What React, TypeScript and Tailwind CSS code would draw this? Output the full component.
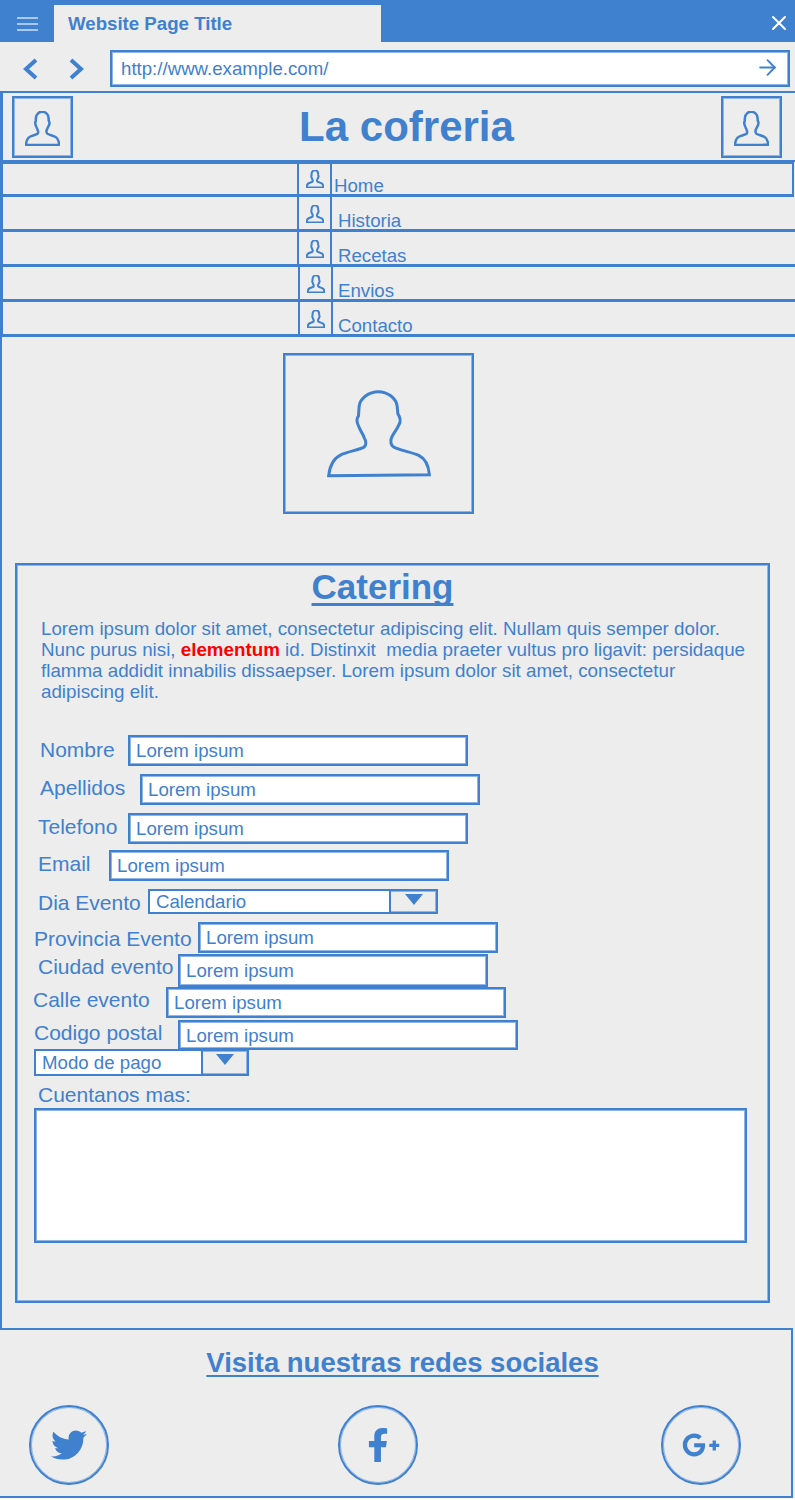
import { ArrowRight, X } from 'lucide-react';
import { FaFacebookF, FaGooglePlusG, FaTwitter } from 'react-icons/fa';

// the wireframe's lines are 2px with a soft lighter edge
const edge = 'border-2 border-[#3f80cf] shadow-[inset_0_0_0_1px_#8fb6e6]';
const circle = 'flex h-[80px] w-[80px] items-center justify-center rounded-full border-2 border-[#3f80cf] shadow-[inset_0_0_0_1px_#8fb6e6]';

const navItems = [
  { label: 'Home', cell: 'ml-[294px] pt-[6px]', text: 'pl-[2px] h-[32px]' },
  { label: 'Historia', cell: 'ml-[294px] pt-[8px]', text: 'pl-[6px] h-[34px]' },
  { label: 'Recetas', cell: 'ml-[294px] pt-[8px]', text: 'pl-[6px] h-[34px]' },
  { label: 'Envios', cell: 'ml-[295px] pt-[8px]', text: 'pl-[5px] h-[34px]' },
  { label: 'Contacto', cell: 'ml-[295px] pt-[8px]', text: 'pl-[5px] h-[34px]' },
];

function Person({ className, weight = 2 }: { className: string; weight?: number }) {
  return (
    <svg className={className} viewBox="0 0 320 265" preserveAspectRatio="none" fill="none" stroke="currentColor">
      <path
        vectorEffect="non-scaling-stroke"
        strokeWidth={weight}
        d="M8 258C12 225 22 205 45 195C65 186 100 180 115 172C122 165 122 155 115 143C112 132 104 125 98 108C92 95 92 85 98 78L100 50C102 25 130 5 158 5C186 5 213 25 215 50L217 72C226 85 226 95 220 105C213 122 198 135 196 150C195 160 198 168 205 172C225 182 260 188 280 197C300 207 310 230 312 255Z"
      />
    </svg>
  );
}

function Field({ className }: { className: string }) {
  return (
    <input
      readOnly
      defaultValue="Lorem ipsum"
      className={`bg-white ${edge} px-[6px] pt-[2px] text-[18.67px] outline-none ${className}`}
    />
  );
}

function Dropdown({ label, className, boxWidth }: { label: string; className: string; boxWidth: string }) {
  return (
    <div className={`flex ${edge} ${className}`}>
      <div className={`flex items-center bg-white pl-[6px] pt-[1px] text-[18.67px] leading-[19px] ${boxWidth}`}>{label}</div>
      <div className="flex flex-1 items-start justify-center border-l-2 border-[#3f80cf] pt-[3px]">
        <div className="h-0 w-0 border-x-[9px] border-t-[11px] border-x-transparent border-t-[#3f80cf]" />
      </div>
    </div>
  );
}

export default function App() {
  return (
    <div className="w-[795px] h-[1500px] overflow-hidden bg-white text-[#3f80cf] font-['Liberation_Sans',Arial,sans-serif]">
      {/* browser chrome */}
      <div className="flex h-[42px] bg-[#3f80cf]">
        <div className="flex w-[54px] items-center justify-center pt-[5px]">
          <div className="flex w-[21px] flex-col gap-[4px]">
            <div className="h-[2px] bg-[#a9c8ee]" />
            <div className="h-[2px] bg-[#a9c8ee]" />
            <div className="h-[2px] bg-[#a9c8ee]" />
          </div>
        </div>
        <div className="mt-[5px] flex w-[327px] items-center bg-[#ededed] pl-[14px] text-[18.67px] font-bold">
          Website Page Title
        </div>
        <div className="flex flex-1 items-center justify-end pr-[4px] pt-[4px] text-white">
          <X size={24} strokeWidth={2} />
        </div>
      </div>
      <div className="flex h-[49px] items-start bg-[#ededed] pl-[23px] pt-[8px]">
        <svg className="mt-[8px] h-[22px] w-[15px]" viewBox="0 0 15 22" fill="none" stroke="currentColor" strokeWidth="4">
          <path d="M13 2L3 11L13 20" />
        </svg>
        <svg className="ml-[31px] mt-[8px] h-[22px] w-[15px]" viewBox="0 0 15 22" fill="none" stroke="currentColor" strokeWidth="4">
          <path d="M2 2L12 11L2 20" />
        </svg>
        <div className={`ml-[26px] flex h-[37px] w-[680px] items-center justify-between ${edge} bg-white pl-[9px] pr-[8px] text-[18.67px]`}>
          <span>http://www.example.com/</span>
          <ArrowRight size={25} strokeWidth={1.8} className="mb-[2px]" />
        </div>
      </div>

      <div className="bg-[#ededed]">
        {/* header */}
        <div className="flex h-[71px] items-center justify-between border-y-[2px] border-l-[3px] border-[#3f80cf] pl-[9px] pr-[13px]">
          <div className={`flex h-[62px] w-[61px] items-center justify-center ${edge} pt-[3px]`}>
            <Person className="h-[35px] w-[35px]" weight={2.5} />
          </div>
          <h1 className="ml-[19px] text-[42px] font-bold leading-none">La cofreria</h1>
          <div className={`flex h-[62px] w-[61px] items-center justify-center ${edge} pt-[3px]`}>
            <Person className="h-[35px] w-[35px]" weight={2.5} />
          </div>
        </div>

        {/* nav */}
        <nav>
          {navItems.map((item, index) => (
            <div
              key={index}
              className={`flex h-[35px] border-b-[3px] border-l-[3px] border-[#3f80cf] ${index === 0 ? 'w-[794px] border-t-[2px] border-r-[2px]' : ''}`}
            >
              <div className={`flex w-[35px] shrink-0 items-start justify-center border-x-[2px] border-[#3f80cf] ${item.cell}`}>
                <Person className="h-[18px] w-[18px]" />
              </div>
              <div className={`flex items-end text-[18.67px] leading-[20px] ${item.text}`}>{item.label}</div>
            </div>
          ))}
        </nav>

        {/* main */}
        <main className="h-[991px] border-l-[2px] border-[#3f80cf] pt-[16px]">
          <div className={`ml-[281px] flex h-[161px] w-[191px] items-center justify-center ${edge}`}>
            <Person className="h-[88px] w-[106px]" weight={3} />
          </div>
          <section className={`ml-[13px] mt-[49px] h-[740px] w-[755px] ${edge}`}>
            <h2 className="pr-[20px] text-center text-[35px] font-bold leading-[44px] underline decoration-[3px] underline-offset-[4px] [text-decoration-skip-ink:none]">
              Catering
            </h2>
            <p className="ml-[24px] mt-[10px] w-[710px] text-[18.78px] leading-[20.9px]">
              Lorem ipsum dolor sit amet, consectetur adipiscing elit. Nullam quis semper dolor. Nunc purus nisi,{' '}
              <b className="text-[#ff0000]">elementum</b> id. Distinxit&nbsp; media praeter vultus pro ligavit: persidaque flamma addidit innabilis
              dissaepser. Lorem ipsum dolor sit amet, consectetur adipiscing elit.
            </p>

            <form className="mt-[32px] text-[21px] leading-[24px]">
              <div className="flex h-[39px] pl-[23px]">
                <label className="w-[88px] pt-[3px]">Nombre</label>
                <Field className="h-[31px] w-[340px]" />
              </div>
              <div className="flex h-[39px] pl-[23px]">
                <label className="w-[100px] pt-[2px]">Apellidos</label>
                <Field className="h-[31px] w-[340px]" />
              </div>
              <div className="flex h-[37px] pl-[21px]">
                <label className="w-[90px] pt-[2px]">Telefono</label>
                <Field className="h-[31px] w-[340px]" />
              </div>
              <div className="flex h-[39px] pl-[21px]">
                <label className="w-[71px] pt-[2px]">Email</label>
                <Field className="h-[31px] w-[340px]" />
              </div>
              <div className="flex h-[33px] pl-[21px]">
                <label className="w-[110px] pt-[2px]">Dia Evento</label>
                <Dropdown label="Calendario" className="h-[25px] w-[290px]" boxWidth="w-[239px]" />
              </div>
              <div className="flex h-[32px] pl-[17px]">
                <label className="w-[164px] pt-[5px]">Provincia Evento</label>
                <Field className="h-[31px] w-[300px]" />
              </div>
              <div className="flex h-[33px] pl-[21px]">
                <label className="w-[140px] pt-[1px]">Ciudad evento</label>
                <Field className="h-[33px] w-[310px]" />
              </div>
              <div className="flex h-[33px] pl-[16px]">
                <label className="w-[133px] pt-[1px]">Calle evento</label>
                <Field className="h-[31px] w-[340px]" />
              </div>
              <div className="flex h-[29px] pl-[17px]">
                <label className="w-[144px] pt-[1px]">Codigo postal</label>
                <Field className="h-[30px] w-[340px]" />
              </div>
              <div className="pl-[17px]">
                <Dropdown label="Modo de pago" className="h-[27px] w-[215px]" boxWidth="w-[165px]" />
              </div>
              <label className="ml-[21px] mt-[7px] block">Cuentanos mas:</label>
              <textarea readOnly className={`ml-[17px] mt-[1px] block h-[135px] w-[713px] resize-none ${edge} bg-white outline-none`} />
            </form>
          </section>
        </main>

        {/* footer */}
        <footer className="h-[170px] w-[793px] border-y-[2px] border-r-[2px] border-[#3f80cf]">
          <h2 className="mt-[16px] pl-[14px] text-center text-[27.5px] font-bold leading-[34px] underline decoration-[2px] underline-offset-[3px] [text-decoration-skip-ink:none]">
            Visita nuestras redes sociales
          </h2>
          <div className="mt-[25px] flex pl-[29px]">
            <div className={circle}>
              <FaTwitter size={36} />
            </div>
            <div className={`ml-[229px] ${circle}`}>
              <FaFacebookF size={34} />
            </div>
            <div className={`ml-[243px] ${circle}`}>
              <FaGooglePlusG size={38} />
            </div>
          </div>
        </footer>
      </div>
    </div>
  );
}
